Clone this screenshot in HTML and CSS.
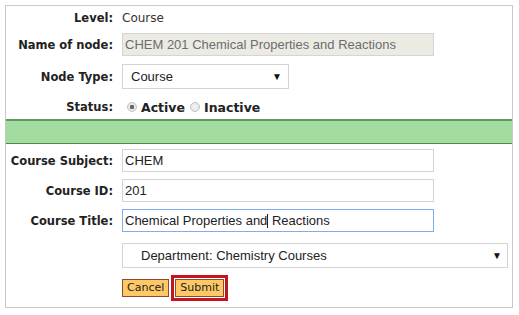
FILE: index.html
```html
<!DOCTYPE html>
<html lang="en">
  <head>
    <meta charset="UTF-8" />
    <meta name="viewport" content="width=device-width, initial-scale=1.0" />
    <title>Edit Node</title>
    <link rel="stylesheet" href="styles.css">
  </head>
  <body>
    <div class="node-box">
      <div class="row row-level">
        <span class="label">Level:</span>
        <span class="level-value">Course</span>
      </div>
      <div class="row row-name">
        <span class="label">Name of node:</span>
        <div class="field field-disabled">CHEM 201 Chemical Properties and Reactions</div>
      </div>
      <div class="row row-type">
        <span class="label">Node Type:</span>
        <div class="select select-type">
          <span>Course</span>
          <span class="arrow">&#9660;</span>
        </div>
      </div>
      <div class="row row-status">
        <span class="label">Status:</span>
        <div class="radios">
          <span class="radio checked"></span>
          <span class="radio-label">Active</span>
          <span class="radio"></span>
          <span class="radio-label">Inactive</span>
        </div>
      </div>

      <div class="band"></div>

      <div class="row row-subject">
        <span class="label">Course Subject:</span>
        <div class="field">CHEM</div>
      </div>
      <div class="row row-input">
        <span class="label">Course ID:</span>
        <div class="field">201</div>
      </div>
      <div class="row row-input">
        <span class="label">Course Title:</span>
        <div class="field field-focus">Chemical Properties and<span class="caret"></span> Reactions</div>
      </div>
      <div class="row row-dept">
        <span></span>
        <div class="select select-dept">
          <span>Department: Chemistry Courses</span>
          <span class="arrow">&#9660;</span>
        </div>
      </div>
      <div class="row row-buttons">
        <span></span>
        <div class="buttons">
          <button type="button" class="btn">Cancel</button>
          <span class="btn-focus"><button type="submit" class="btn">Submit</button></span>
        </div>
      </div>
    </div>
  </body>
</html>
```

FILE: styles.css
```css
body {
  margin: 0;
  padding: 5px;
  background-color: white;
  font-family: "DejaVu Sans", Verdana, sans-serif;
  font-size: 12px;
  color: #222;
}
.node-box {
  width: 506px;
  border: 1px solid #c8c8c8;
  padding-bottom: 5px;
}
.row {
  display: grid;
  grid-template-columns: 107px 1fr;
  column-gap: 9px;
  align-items: center;
}
.label {
  text-align: right;
  font-weight: bold;
  font-size: 11.5px;
  color: #222;
  white-space: nowrap;
}
.row-level {
  height: 24px;
}
.level-value {
  font-size: 12px;
  color: #333;
}
.row-name {
  margin-top: 3px;
  height: 23px;
}
.row-type {
  margin-top: 8px;
  height: 25px;
}
.row-status {
  margin-top: 7px;
  height: 22px;
}
.row-subject {
  margin-top: 5px;
  height: 23px;
}
.row-input {
  margin-top: 7px;
  height: 23px;
}
.row-dept {
  margin-top: 11px;
  height: 25px;
}
.row-buttons {
  margin-top: 5px;
  height: 29px;
}
.field {
  width: 312px;
  height: 23px;
  box-sizing: border-box;
  border: 1px solid #d4d4d4;
  padding: 0 2px;
  font-family: "Liberation Sans", Arial, sans-serif;
  font-size: 13px;
  line-height: 21px;
  color: #222;
  white-space: nowrap;
}
.field-disabled {
  background-color: #ebebe4;
  color: #6d6d6d;
}
.field-focus {
  border-color: #80aee6;
}
.caret {
  display: inline-block;
  width: 1px;
  height: 14px;
  background-color: #222;
  vertical-align: -3px;
}
.select {
  height: 25px;
  box-sizing: border-box;
  border: 1px solid #d4d4d4;
  display: flex;
  align-items: center;
  justify-content: space-between;
  font-family: "Liberation Sans", Arial, sans-serif;
  font-size: 13px;
  color: #222;
}
.select-type {
  width: 167px;
  padding: 0 6px 0 8px;
}
.select-dept {
  width: 386px;
  padding: 0 5px 0 18px;
}
.arrow {
  font-size: 10px;
  color: #111;
}
.radios {
  display: flex;
  align-items: center;
  padding-left: 5px;
}
.radio {
  width: 10px;
  height: 10px;
  box-sizing: border-box;
  border-radius: 50%;
  border: 1px solid #c2c2c2;
  background: radial-gradient(circle, #f4f4f4 0, #e2e2e2 100%);
  margin-right: 4px;
}
.radio.checked {
  background: radial-gradient(circle, #666 0, #666 2px, #ececec 2.5px, #dcdcdc 100%);
}
.radio-label {
  font-weight: bold;
  font-size: 12.5px;
  margin-right: 5px;
}
.band {
  margin-top: 1px;
  height: 22px;
  background-color: #a3dca0;
  border-top: 2px solid #5e9a5c;
  border-bottom: 1px solid #4f8a4d;
}
.buttons {
  display: flex;
  align-items: center;
  gap: 2px;
}
.btn {
  height: 18px;
  padding: 0 4px;
  background-color: #fec965;
  border: 1px solid #8e4a2c;
  border-radius: 0;
  font-family: "DejaVu Sans", Verdana, sans-serif;
  font-size: 11px;
  color: #222;
  line-height: 16px;
}
.btn-focus {
  border: 3px solid #c4141f;
  padding: 1px;
  display: flex;
}
```
